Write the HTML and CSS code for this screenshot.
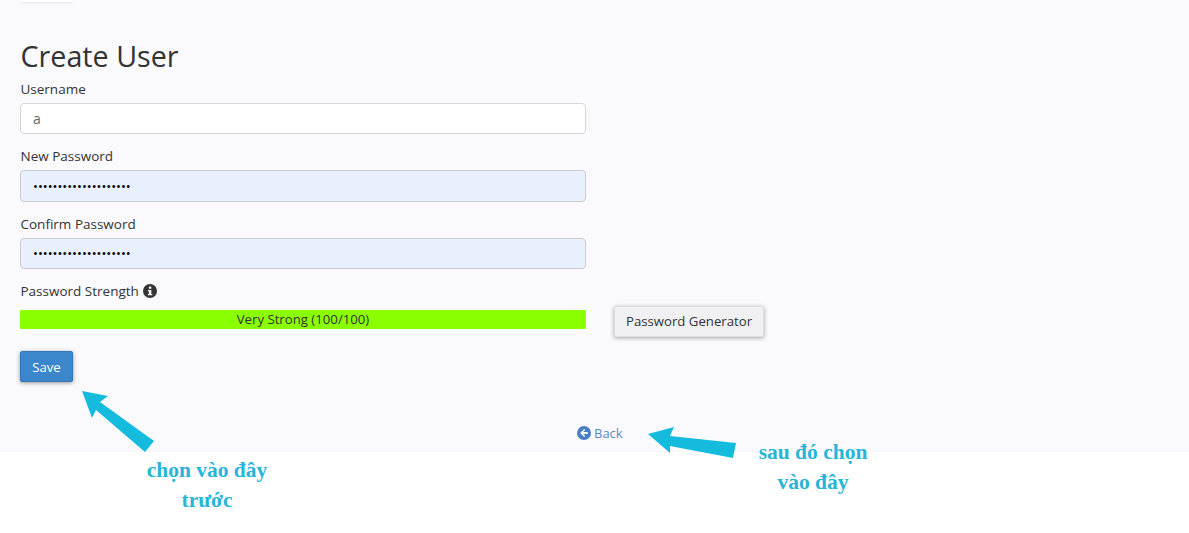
FILE: index.html
```html
<!DOCTYPE html>
<html lang="vi">
<head>
<meta charset="utf-8">
<title>Create User</title>
<link rel="stylesheet" href="styles.css">
</head>
<body>
<main class="panel">
  <div class="top-tab"></div>
  <h1 class="title">Create User</h1>
  <form class="form">
    <div class="field">
      <label class="label" for="u">Username</label>
      <input class="input" id="u" type="text" value="a">
    </div>
    <div class="field">
      <label class="label" for="p1">New Password</label>
      <input class="input input-filled" id="p1" type="password" value="aaaaaaaaaaaaaaaaaaaa">
    </div>
    <div class="field">
      <label class="label" for="p2">Confirm Password</label>
      <input class="input input-filled" id="p2" type="password" value="aaaaaaaaaaaaaaaaaaaa">
    </div>
    <div class="strength-row">
      <div class="strength-col">
        <div class="label strength-label">Password Strength
          <svg class="info" viewBox="0 0 14 14" width="14" height="14"><circle cx="7" cy="7" r="7" fill="#333"/><rect x="5.9" y="2.6" width="2.4" height="2.2" fill="#fff"/><path d="M4.9 6h3.4v3.9h1v1.3H4.9V9.9h1V7.3h-1z" fill="#fff"/></svg>
        </div>
        <div class="bar">Very Strong (100/100)</div>
      </div>
      <button class="btn btn-gen" type="button">Password Generator</button>
    </div>
    <button class="btn btn-save" type="button">Save</button>
  </form>
  <a class="back" href="#">
    <svg viewBox="0 0 14 14" width="14" height="14"><circle cx="7" cy="7" r="7" fill="#4a7fc1"/><path d="M7.2 3 3.2 7l4 4 1-1-2-2h4.6V6H6.2l2-2z" fill="#fff"/></svg>
    Back
  </a>
</main>
<svg class="arrows" width="1189" height="533" viewBox="0 0 1189 533">
  <polygon points="82,391 108,396 100,402 154,441 145,452 96,410 92,418" fill="#14bbdd"/>
  <polygon points="648,434 674,427 670,436 736,443 733,458 670,446 670,453" fill="#14bbdd"/>
</svg>
<p class="note note-a">chọn vào đây<br>trước</p>
<p class="note note-b">sau đó chọn<br>vào đây</p>
</body>
</html>
```
FILE: styles.css
```css
* { box-sizing: border-box; }
html, body { margin: 0; height: 533px; background: #fff; overflow: hidden; }
body { font-family: "Open Sans", sans-serif; color: #333; position: relative; }
.panel { height: 452px; padding: 0 20px; background: #fafafc; position: relative; }
.top-tab { width: 53px; height: 2px; background: #fff; box-shadow: 0 1px 2px rgba(0,0,0,.08); border-radius: 0 0 2px 2px; }
.title { margin: 0; padding: 35px 0 2.5px 0.5px; font-size: 28.7px; font-weight: 400; line-height: 38px; color: #333; }
.form { display: flex; flex-direction: column; width: 744px; }
.field { margin-bottom: 11px; }
.label { display: block; padding-left: 0.5px; font-size: 13.5px; font-weight: 500; line-height: 22px; margin-bottom: 3px; color: #333; }
.input { display: block; width: 566px; height: 31.5px; padding: 0 12px; border: 1px solid #d6d6d8; border-radius: 4px; background: #fff; font: 14px "Open Sans", sans-serif; color: #666; outline: none; }
.input-filled { background: #e8f0fe; border-color: #c9ccd2; color: #000; font-size: 13px; }
.strength-row { display: flex; align-items: flex-end; gap: 28px; }
.strength-col { width: 566px; }
.strength-label { display: flex; align-items: center; gap: 4px; margin: 0 0 8px; }
.bar { height: 19px; background: #8aff00; border-radius: 1px; text-align: center; font-size: 13.2px; line-height: 18px; color: #333; }
.btn { font-family: "Open Sans", sans-serif; font-size: 13.2px; border-radius: 2px; border: 1px solid #ddd; cursor: pointer; }
.btn-gen { width: 150px; height: 31px; margin-bottom: -8px; padding: 0 0 2px; background: #f0f0f2; color: #333; box-shadow: 0 1px 4px rgba(0,0,0,.35); }
.btn-save { align-self: flex-start; width: 53px; height: 31px; margin-top: 22px; padding: 0; background: #3c87cb; border-color: #3178b8; color: #fff; box-shadow: 0 1px 4px rgba(0,0,0,.4); }
.back { position: absolute; left: 577px; top: 424px; display: flex; align-items: center; gap: 3px; font-size: 13px; line-height: 18px; color: #5b8bc2; text-decoration: none; }
.arrows { position: absolute; left: 0; top: 0; pointer-events: none; }
.note { position: absolute; margin: 0; font: 700 21.5px/30px "Liberation Serif", serif; color: #27b5d8; text-align: center; white-space: nowrap; }
.note-a { left: 107px; top: 455px; width: 200px; }
.note-b { left: 713px; top: 437px; width: 200px; }
```
